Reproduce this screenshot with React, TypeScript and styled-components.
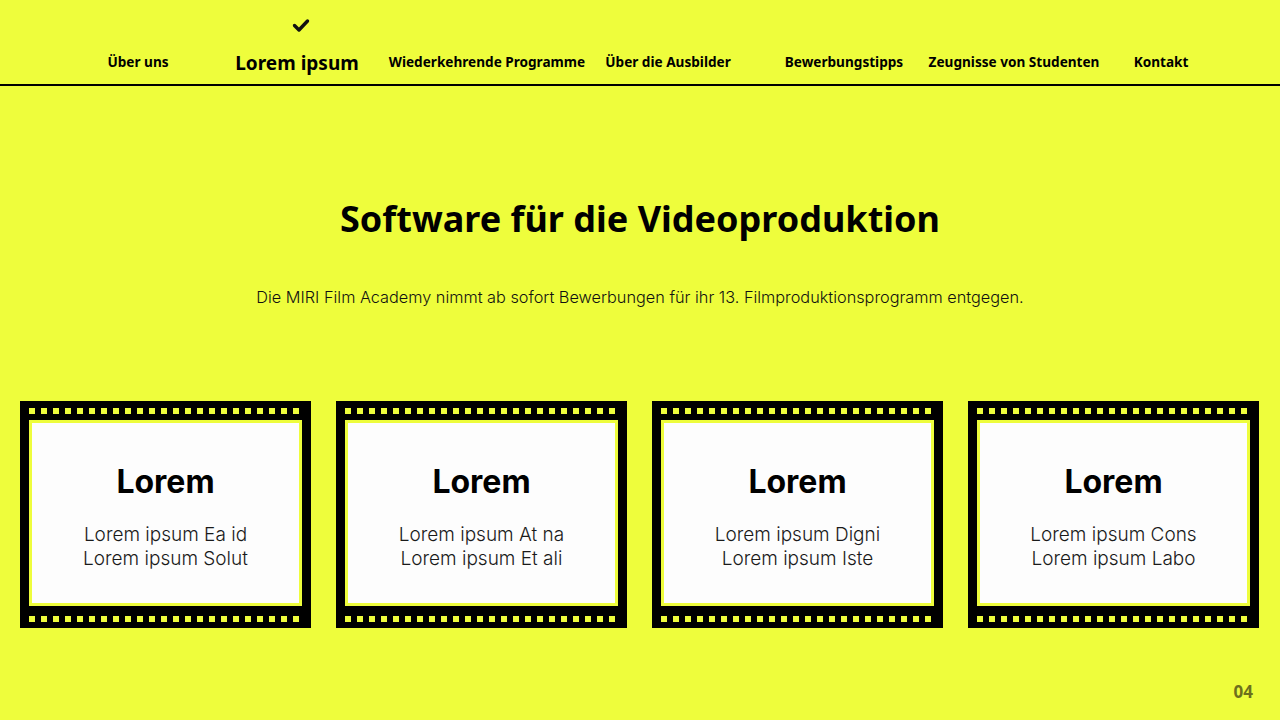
import styled, { createGlobalStyle } from "styled-components";

const Global = createGlobalStyle`
  html, body {
    margin: 0;
    padding: 0;
    background: #eefd3c;
  }
  * {
    box-sizing: border-box;
  }
`;

type NavItem = {
  label: string;
  width: number;
  active?: boolean;
};

const navItems: NavItem[] = [
  { label: "Über uns", width: 156 },
  { label: "Lorem ipsum", width: 162, active: true },
  { label: "Wiederkehrende Programme", width: 218 },
  { label: "Über die Ausbilder", width: 144 },
  { label: "Bewerbungstipps", width: 208 },
  { label: "Zeugnisse von Studenten", width: 132 },
  { label: "Kontakt", width: 162 },
];

const frames = [
  { title: "Lorem", lines: ["Lorem ipsum Ea id", "Lorem ipsum Solut"] },
  { title: "Lorem", lines: ["Lorem ipsum At na", "Lorem ipsum Et ali"] },
  { title: "Lorem", lines: ["Lorem ipsum Digni", "Lorem ipsum Iste"] },
  { title: "Lorem", lines: ["Lorem ipsum Cons", "Lorem ipsum Labo"] },
];

function Check() {
  return (
    <svg width="17" height="13" viewBox="0 0 17 13">
      <path d="M2 6.5 L6.5 11 L15 2" fill="none" stroke="#111" strokeWidth="3.4" strokeLinecap="round" strokeLinejoin="round" />
    </svg>
  );
}

function App() {
  return (
    <Page>
      <Global />
      <Nav>
        {navItems.map((item) => (
          <NavCell key={item.label} $width={item.width}>
            {item.active && (
              <CheckMark>
                <Check />
              </CheckMark>
            )}
            <NavLabel $active={item.active}>{item.label}</NavLabel>
          </NavCell>
        ))}
      </Nav>
      <Hero>
        <Title>Software für die Videoproduktion</Title>
        <Lead>
          Die MIRI Film Academy nimmt ab sofort Bewerbungen für ihr 13. Filmproduktionsprogramm entgegen.
        </Lead>
      </Hero>
      <Strip>
        {frames.map((frame, i) => (
          <Frame key={i}>
            <Holes />
            <Picture>
              <FrameTitle>{frame.title}</FrameTitle>
              <FrameText>
                {frame.lines.map((line) => (
                  <div key={line}>{line}</div>
                ))}
              </FrameText>
            </Picture>
            <Holes />
          </Frame>
        ))}
      </Strip>
      <PageNumber>04</PageNumber>
    </Page>
  );
}

const Page = styled.div`
  position: relative;
  width: 1280px;
  height: 720px;
  overflow: hidden;
  background: #eefd3c;
  color: #000;
`;

const Nav = styled.nav`
  display: flex;
  height: 86px;
  padding-left: 60px;
  border-bottom: 2px solid #000;
`;

const NavCell = styled.div<{ $width: number }>`
  position: relative;
  width: ${(p) => p.$width}px;
  display: flex;
  justify-content: center;
  align-items: flex-start;
  padding-top: 53px;
`;

const NavLabel = styled.span<{ $active?: boolean }>`
  font-family: "Noto Sans", sans-serif;
  font-weight: 700;
  font-size: ${(p) => (p.$active ? "19px" : "13.6px")};
  line-height: 1;
  margin-top: ${(p) => (p.$active ? "1px" : "2px")};
  white-space: nowrap;
`;

const CheckMark = styled.div`
  position: absolute;
  top: 19px;
  left: 50%;
  margin-left: 4px;
  transform: translateX(-50%);
  display: flex;
`;

const Hero = styled.section`
  display: flex;
  flex-direction: column;
  align-items: center;
  padding-top: 110px;
`;

const Title = styled.h1`
  margin: 0;
  font-family: "Noto Sans", sans-serif;
  font-weight: 700;
  font-size: 36px;
  line-height: 46px;
`;

const Lead = styled.p`
  margin: 45px 0 0;
  font-family: Inter, sans-serif;
  font-weight: 300;
  font-size: 16.3px;
  line-height: 20px;
  color: #111;
`;

const Strip = styled.section`
  display: flex;
  justify-content: space-between;
  padding: 0 21px 0 20px;
  margin-top: 94px;
`;

const Frame = styled.div`
  width: 291px;
  height: 227px;
  background: #000;
  display: flex;
  flex-direction: column;
  padding: 0 9px;
`;

const Holes = styled.div`
  height: 19px;
  flex: none;
  background-image: linear-gradient(90deg, #eefd3c 0 6px, transparent 6px 12px);
  background-size: 12px 6px;
  background-repeat: repeat-x;
  background-position: 0 7px;
  &:last-child {
    height: 22px;
    background-position: 0 10px;
  }
`;

const Picture = styled.div`
  flex: 1;
  background: #fdfdfd;
  border: 3px solid #eefd3c;
  display: flex;
  flex-direction: column;
  align-items: center;
  padding-top: 39px;
`;

const FrameTitle = styled.div`
  font-family: Inter, sans-serif;
  font-weight: 700;
  font-size: 32px;
  line-height: 40px;
`;

const FrameText = styled.div`
  margin-top: 21px;
  font-family: Inter, sans-serif;
  font-weight: 300;
  font-size: 19px;
  line-height: 24px;
  text-align: center;
  color: #1a1a1a;
`;

const PageNumber = styled.div`
  position: absolute;
  right: 27px;
  bottom: 17px;
  font-family: "Noto Sans", sans-serif;
  font-weight: 700;
  font-size: 17px;
  color: #6d6f1c;
`;

export default App;
